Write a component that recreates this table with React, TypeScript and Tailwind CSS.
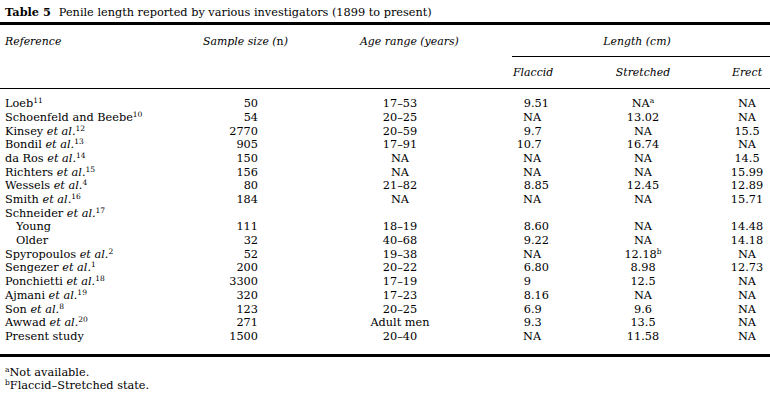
import React from 'react';

type Row = {
  ref: string;
  etal?: boolean;
  sup?: string;
  indent?: boolean;
  n?: string;
  age?: string;
  flaccid?: string;
  stretched?: string;
  sSup?: string;
  erect?: string;
};

const ROWS: Row[] = [
  { ref: 'Loeb', sup: '11', n: '50', age: '17–53', flaccid: '9.51', stretched: 'NA', sSup: 'a', erect: 'NA' },
  { ref: 'Schoenfeld and Beebe', sup: '10', n: '54', age: '20–25', flaccid: 'NA', stretched: '13.02', erect: 'NA' },
  { ref: 'Kinsey', etal: true, sup: '12', n: '2770', age: '20–59', flaccid: '9.7', stretched: 'NA', erect: '15.5' },
  { ref: 'Bondil', etal: true, sup: '13', n: '905', age: '17–91', flaccid: '10.7', stretched: '16.74', erect: 'NA' },
  { ref: 'da Ros', etal: true, sup: '14', n: '150', age: 'NA', flaccid: 'NA', stretched: 'NA', erect: '14.5' },
  { ref: 'Richters', etal: true, sup: '15', n: '156', age: 'NA', flaccid: 'NA', stretched: 'NA', erect: '15.99' },
  { ref: 'Wessels', etal: true, sup: '4', n: '80', age: '21–82', flaccid: '8.85', stretched: '12.45', erect: '12.89' },
  { ref: 'Smith', etal: true, sup: '16', n: '184', age: 'NA', flaccid: 'NA', stretched: 'NA', erect: '15.71' },
  { ref: 'Schneider', etal: true, sup: '17' },
  { ref: 'Young', indent: true, n: '111', age: '18–19', flaccid: '8.60', stretched: 'NA', erect: '14.48' },
  { ref: 'Older', indent: true, n: '32', age: '40–68', flaccid: '9.22', stretched: 'NA', erect: '14.18' },
  { ref: 'Spyropoulos', etal: true, sup: '2', n: '52', age: '19–38', flaccid: 'NA', stretched: '12.18', sSup: 'b', erect: 'NA' },
  { ref: 'Sengezer', etal: true, sup: '1', n: '200', age: '20–22', flaccid: '6.80', stretched: '8.98', erect: '12.73' },
  { ref: 'Ponchietti', etal: true, sup: '18', n: '3300', age: '17–19', flaccid: '9', stretched: '12.5', erect: 'NA' },
  { ref: 'Ajmani', etal: true, sup: '19', n: '320', age: '17–23', flaccid: '8.16', stretched: 'NA', erect: 'NA' },
  { ref: 'Son', etal: true, sup: '8', n: '123', age: '20–25', flaccid: '6.9', stretched: '9.6', erect: 'NA' },
  { ref: 'Awwad', etal: true, sup: '20', n: '271', age: 'Adult men', flaccid: '9.3', stretched: '13.5', erect: 'NA' },
  { ref: 'Present study', n: '1500', age: '20–40', flaccid: 'NA', stretched: '11.58', erect: 'NA' },
];

const cols = 'grid grid-cols-[200px_150px_100px_62px_78px_106px_28px_46px]';
const sup = 'relative -top-[4px] text-[7.5px] leading-none';

// flaccid column is decimal aligned
function Dec({ v }: { v?: string }) {
  if (!v) return null;
  if (!/^[\d.]+$/.test(v)) return <span className="pl-[11px]">{v}</span>;
  const [i, fr] = v.split('.');
  return (
    <>
      <span className="inline-block w-[19px] text-right">{i}</span>
      {fr !== undefined && '.' + fr}
    </>
  );
}

export default function App() {
  return (
    <div className="h-[400px] w-[770px] overflow-hidden bg-white text-[11.3px] leading-[13.7px] text-black" style={{ fontFamily: '"DejaVu Serif", serif' }}>
      <div className="flex pl-[5px] pt-[6px]">
        <span className="font-bold">Table 5</span>
        <span className="ml-[8px]">Penile length reported by various investigators (1899 to present)</span>
      </div>

      <div className="mt-[2px] h-[3px] bg-black" />

      <div className={`${cols} h-[32px] items-center text-[10.9px] italic`}>
        <div className="pl-[5px] pt-[3px]">Reference</div>
        <div className="whitespace-nowrap pl-[3px] pt-[3px]">
          Sample size (<span className="not-italic">n</span>)
        </div>
        <div className="col-span-2 whitespace-nowrap pl-[10px] pt-[3px]">Age range (years)</div>
        <div className="col-span-4 flex h-full items-center justify-center border-b-[1.5px] border-black pr-[8px] pt-[3px]">
          Length (cm)
        </div>
      </div>

      <div className={`${cols} h-[31px] items-center text-[10.9px] italic`}>
        <div className="col-span-4" />
        <div className="pl-px pt-[2px]">Flaccid</div>
        <div className="pt-[2px] text-center">Stretched</div>
        <div />
        <div className="pt-[2px] text-center">Erect</div>
      </div>

      <div className="h-[1.5px] bg-black" />

      <div className="pt-[8px] pb-[10px]">
        {ROWS.map((r) => (
          <div key={r.ref} className={`${cols} h-[13.7px] whitespace-nowrap`}>
            <div className={r.indent ? 'pl-[16px]' : 'pl-[5px]'}>
              {r.ref}
              {r.etal && (
                <>
                  {' '}
                  <span className="italic">et al.</span>
                </>
              )}
              {r.sup && <sup className={sup}>{r.sup}</sup>}
            </div>
            <div className="pr-[92px] text-right">{r.n}</div>
            <div className="text-center">{r.age}</div>
            <div />
            <div>
              <Dec v={r.flaccid} />
            </div>
            <div className="text-center">
              {r.stretched}
              {r.sSup && <sup className={sup}>{r.sSup}</sup>}
            </div>
            <div />
            <div className="text-center">{r.erect}</div>
          </div>
        ))}
      </div>

      <div className="h-[3px] bg-black" />

      <div className="pl-[5px] pt-[9px]">
        <div>
          <sup className={sup}>a</sup>Not available.
        </div>
        <div>
          <sup className={sup}>b</sup>Flaccid–Stretched state.
        </div>
      </div>
    </div>
  );
}
